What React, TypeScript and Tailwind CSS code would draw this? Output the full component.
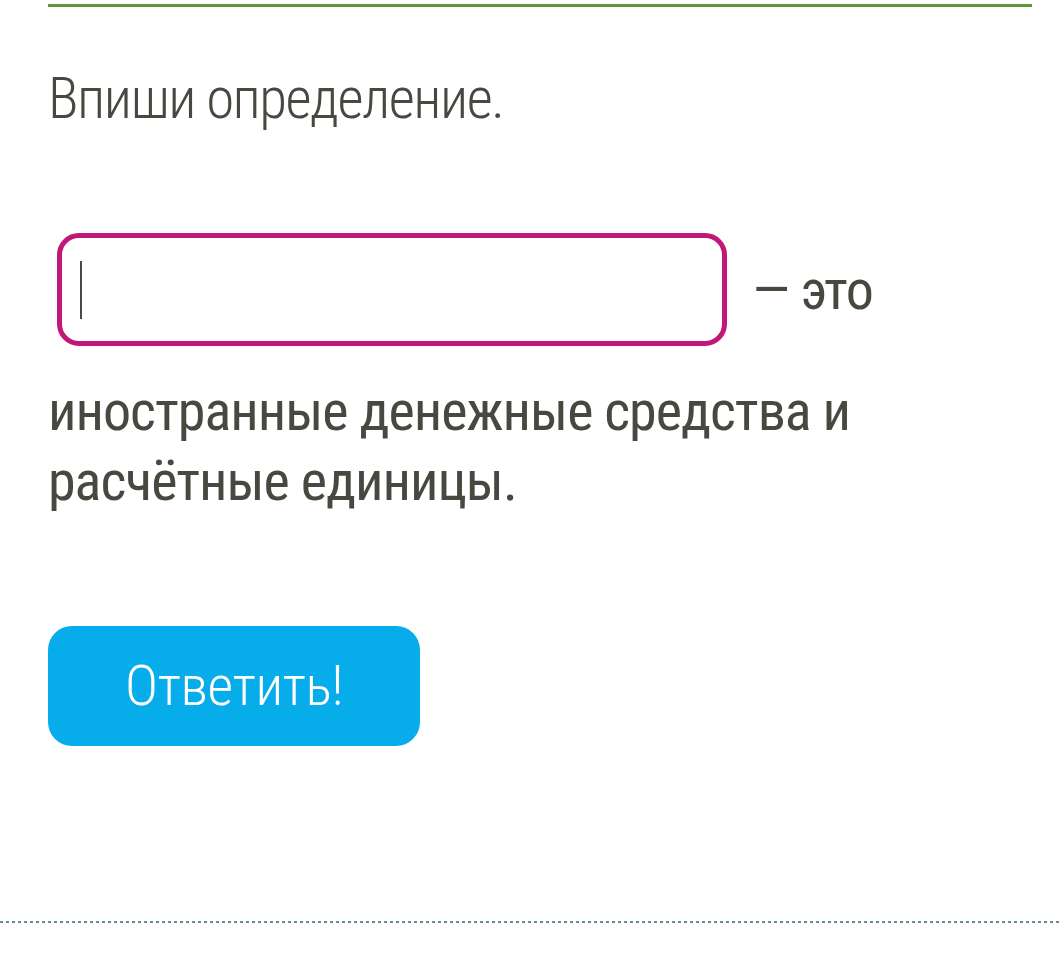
// Fill-in-the-definition exercise card
export default function App() {
  return (
    <div className="min-h-[959px] bg-white font-['Roboto',sans-serif] [font-stretch:condensed] text-[#484840]">
      <div className="ml-[48px] mr-[28px] pt-[4px]">
        <div className="h-[3px] bg-[#5e9640]" />
      </div>

      <div className="px-[48px]">
        <h1 className="mt-[57px] text-[57px] leading-[70px] font-light tracking-[-1.5px]">
          Впиши определение.
        </h1>

        <div className="mt-[99px] flex items-center">
          <div className="ml-[9px] flex h-[113px] w-[670px] items-center rounded-[22px] border-[5px] border-[#c2177a] pl-[18px]">
            <span className="h-[58px] w-[2px] bg-[#4a4a44]" />
          </div>
          <span className="ml-[25px] text-[56px] leading-[70px] tracking-[-1px]">— это</span>
        </div>

        <p className="mt-[30px] w-[900px] text-[56px] leading-[70px] tracking-[-1px]">
          иностранные денежные средства и расчётные единицы.
        </p>

        <button className="mt-[110px] flex h-[120px] w-[372px] items-center justify-center rounded-[24px] bg-[#07adea] text-[56px] font-light leading-none tracking-[-0.5px] text-white">
          Ответить!
        </button>
      </div>

      <div className="mt-[175px] h-[2px] bg-[repeating-linear-gradient(90deg,#66899b_0_3px,transparent_3px_6px)]" />
    </div>
  );
}
